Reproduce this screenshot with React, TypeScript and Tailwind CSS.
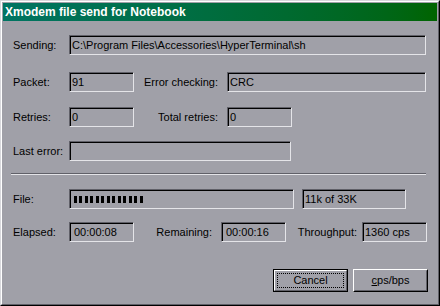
import React from 'react';

const font = { fontFamily: '"Liberation Sans", Arial, sans-serif' };

const Field: React.FC<{ w: string; children?: React.ReactNode }> = ({ w, children }) => (
  <div className={`${w} h-[20px] shrink-0 border border-t-[#606068] border-l-[#606068] border-b-[#e4e4e8] border-r-[#e4e4e8]`}>
    <div className="h-full border-t border-l border-black pl-[1px] flex items-center text-[11px] leading-none text-black whitespace-nowrap overflow-hidden">
      {children}
    </div>
  </div>
);

const Label: React.FC<{ children: React.ReactNode }> = ({ children }) => (
  <div className="w-[56px] shrink-0 text-[11px] leading-none text-black">{children}</div>
);

const RLabel: React.FC<{ w: string; pr: string; children: React.ReactNode }> = ({ w, pr, children }) => (
  <div className={`${w} ${pr} shrink-0 text-right text-[11px] leading-none text-black whitespace-nowrap`}>{children}</div>
);

export default function App() {
  const blocks = Array.from({ length: 13 }, (_, i) => i);
  return (
    <div style={font} className="w-[440px] h-[306px] bg-[#a0a0a8] border border-t-[#d8d8dc] border-l-[#d8d8dc] border-b-black border-r-black">
      <div className="h-full border border-t-white border-l-white border-b-[#606068] border-r-[#606068] p-[1px] flex flex-col">
        <div className="h-[18px] bg-gradient-to-r from-[#007462] to-[#006400] flex items-center pl-[2px]">
          <span className="text-white font-bold text-[12px] leading-none">Xmodem file send for Notebook</span>
        </div>

        <div className="pl-[10px] flex flex-col">
          <div className="mt-[14px] flex items-center">
            <Label>Sending:</Label>
            <Field w="w-[357px]">C:\Program Files\Accessories\HyperTerminal\sh</Field>
          </div>

          <div className="mt-[17px] flex items-center">
            <Label>Packet:</Label>
            <Field w="w-[65px]">91</Field>
            <RLabel w="w-[93px]" pr="pr-[9px]">Error checking:</RLabel>
            <Field w="w-[199px]">CRC</Field>
          </div>

          <div className="mt-[15px] flex items-center">
            <Label>Retries:</Label>
            <Field w="w-[65px]">0</Field>
            <RLabel w="w-[93px]" pr="pr-[9px]">Total retries:</RLabel>
            <Field w="w-[65px]">0</Field>
          </div>

          <div className="mt-[14px] flex items-center">
            <Label>Last error:</Label>
            <Field w="w-[222px]" />
          </div>

          <div className="mt-[12px] ml-[-2px] w-[415px] border-t border-t-[#606068] border-b border-b-[#e4e4e8]" />

          <div className="mt-[14px] flex items-center">
            <Label>File:</Label>
            <Field w="w-[225px]">
              <div className="flex items-center pl-[2px]">
                {blocks.map((i) => (
                  <div key={i} className={`w-[3px] h-[7px] bg-black ${i === 0 ? '' : i % 2 ? 'ml-[2px]' : 'ml-[3px]'}`} />
                ))}
              </div>
            </Field>
            <div className="w-[8px] shrink-0" />
            <Field w="w-[104px]">11k of 33K</Field>
          </div>

          <div className="mt-[13px] flex items-center">
            <Label>Elapsed:</Label>
            <Field w="w-[65px]">
              <span className="pl-[2px]">00:00:08</span>
            </Field>
            <RLabel w="w-[87px]" pr="pr-[9px]">Remaining:</RLabel>
            <Field w="w-[65px]">
              <span className="pl-[2px]">00:00:16</span>
            </Field>
            <RLabel w="w-[76px]" pr="pr-[5px]">Throughput:</RLabel>
            <Field w="w-[65px]">1360 cps</Field>
          </div>

          <div className="mt-[27px] ml-[260px] flex gap-[5px]">
            <button className="w-[75px] h-[23px] border border-black p-0 bg-[#a0a0a8]">
              <div className="h-full border border-t-white border-l-white border-b-[#606068] border-r-[#606068] p-[2px]">
                <div className="h-full border border-dotted border-black flex items-center justify-center text-[11px] leading-none text-black">
                  Cancel
                </div>
              </div>
            </button>
            <button className="w-[75px] h-[23px] border border-t-white border-l-white border-b-black border-r-black p-0 bg-[#a0a0a8]">
              <div className="h-full border border-t-[#a0a0a8] border-l-[#a0a0a8] border-b-[#606068] border-r-[#606068] flex items-center justify-center text-[11px] leading-none text-black">
                <span>
                  <span className="underline">c</span>ps/bps
                </span>
              </div>
            </button>
          </div>
        </div>
      </div>
    </div>
  );
}
